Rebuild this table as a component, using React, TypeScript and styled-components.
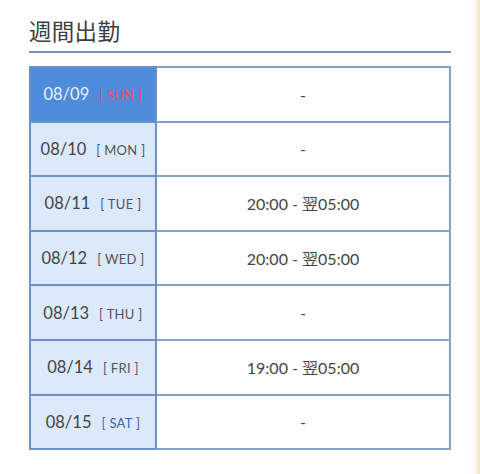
import React from "react";
import styled, { createGlobalStyle } from "styled-components";

const Global = createGlobalStyle`
  html, body { margin: 0; padding: 0; background: #fff; }
  body { font-family: Lato, "Noto Sans CJK JP", sans-serif; color: #444; }
`;

const Page = styled.div`
  position: relative;
  width: 480px;
  height: 474px;
  box-sizing: border-box;
  padding: 14px 29px 0 29px;
  background: linear-gradient(to right, #fff 0, #fff 470px, #fbf8f0 475px, #f3ead6 478px, #eee2c6 480px);
`;

const Title = styled.h2`
  margin: 0;
  font-family: "Noto Sans CJK JP", sans-serif;
  font-weight: 400;
  font-size: 22.5px;
  line-height: 32px;
  color: #3d3d3d;
  padding-bottom: 5px;
  border-bottom: 2px solid #7894bd;
  letter-spacing: 0.3px;
`;

const Table = styled.table`
  margin-top: 13px;
  width: 422px;
  border-collapse: collapse;
  table-layout: fixed;
`;

const DayCell = styled.td<{ $active?: boolean }>`
  width: 126px;
  height: 54.6px;
  padding: 0;
  box-sizing: border-box;
  border: 2px solid #6b92c8;
  background: ${(p) => (p.$active ? "#4f8bdb" : "#dce9fb")};
  color: ${(p) => (p.$active ? "#e9f1fc" : "#444")};
  text-align: center;
  vertical-align: middle;
  font-size: 16.5px;
  white-space: nowrap;
`;

const TimeCell = styled.td`
  padding: 0;
  border: 2px solid #86a2c4;
  background: #fff;
  text-align: center;
  vertical-align: middle;
  font-size: 16px;
  color: #444;
  font-family: Lato, "Noto Sans CJK JP", sans-serif;
`;

const Week = styled.span<{ $color: string }>`
  margin-left: 10px;
  font-size: 13px;
  color: ${(p) => p.$color};
  letter-spacing: 0.3px;
`;

type Row = { date: string; day: string; time: string };

const rows: Row[] = [
  { date: "08/09", day: "SUN", time: "-" },
  { date: "08/10", day: "MON", time: "-" },
  { date: "08/11", day: "TUE", time: "20:00 - 翌05:00" },
  { date: "08/12", day: "WED", time: "20:00 - 翌05:00" },
  { date: "08/13", day: "THU", time: "-" },
  { date: "08/14", day: "FRI", time: "19:00 - 翌05:00" },
  { date: "08/15", day: "SAT", time: "-" },
];

const dayColor = (d: string) =>
  d === "SUN" ? "#e0506c" : d === "SAT" ? "#3d62bd" : "#555";

export default function App() {
  return (
    <Page>
      <Global />
      <Title>週間出勤</Title>
      <Table>
        <tbody>
          {rows.map((r, i) => (
            <tr key={r.date}>
              <DayCell $active={i === 0}>
                {r.date}
                <Week $color={dayColor(r.day)}>[ {r.day} ]</Week>
              </DayCell>
              <TimeCell>{r.time}</TimeCell>
            </tr>
          ))}
        </tbody>
      </Table>
    </Page>
  );
}
